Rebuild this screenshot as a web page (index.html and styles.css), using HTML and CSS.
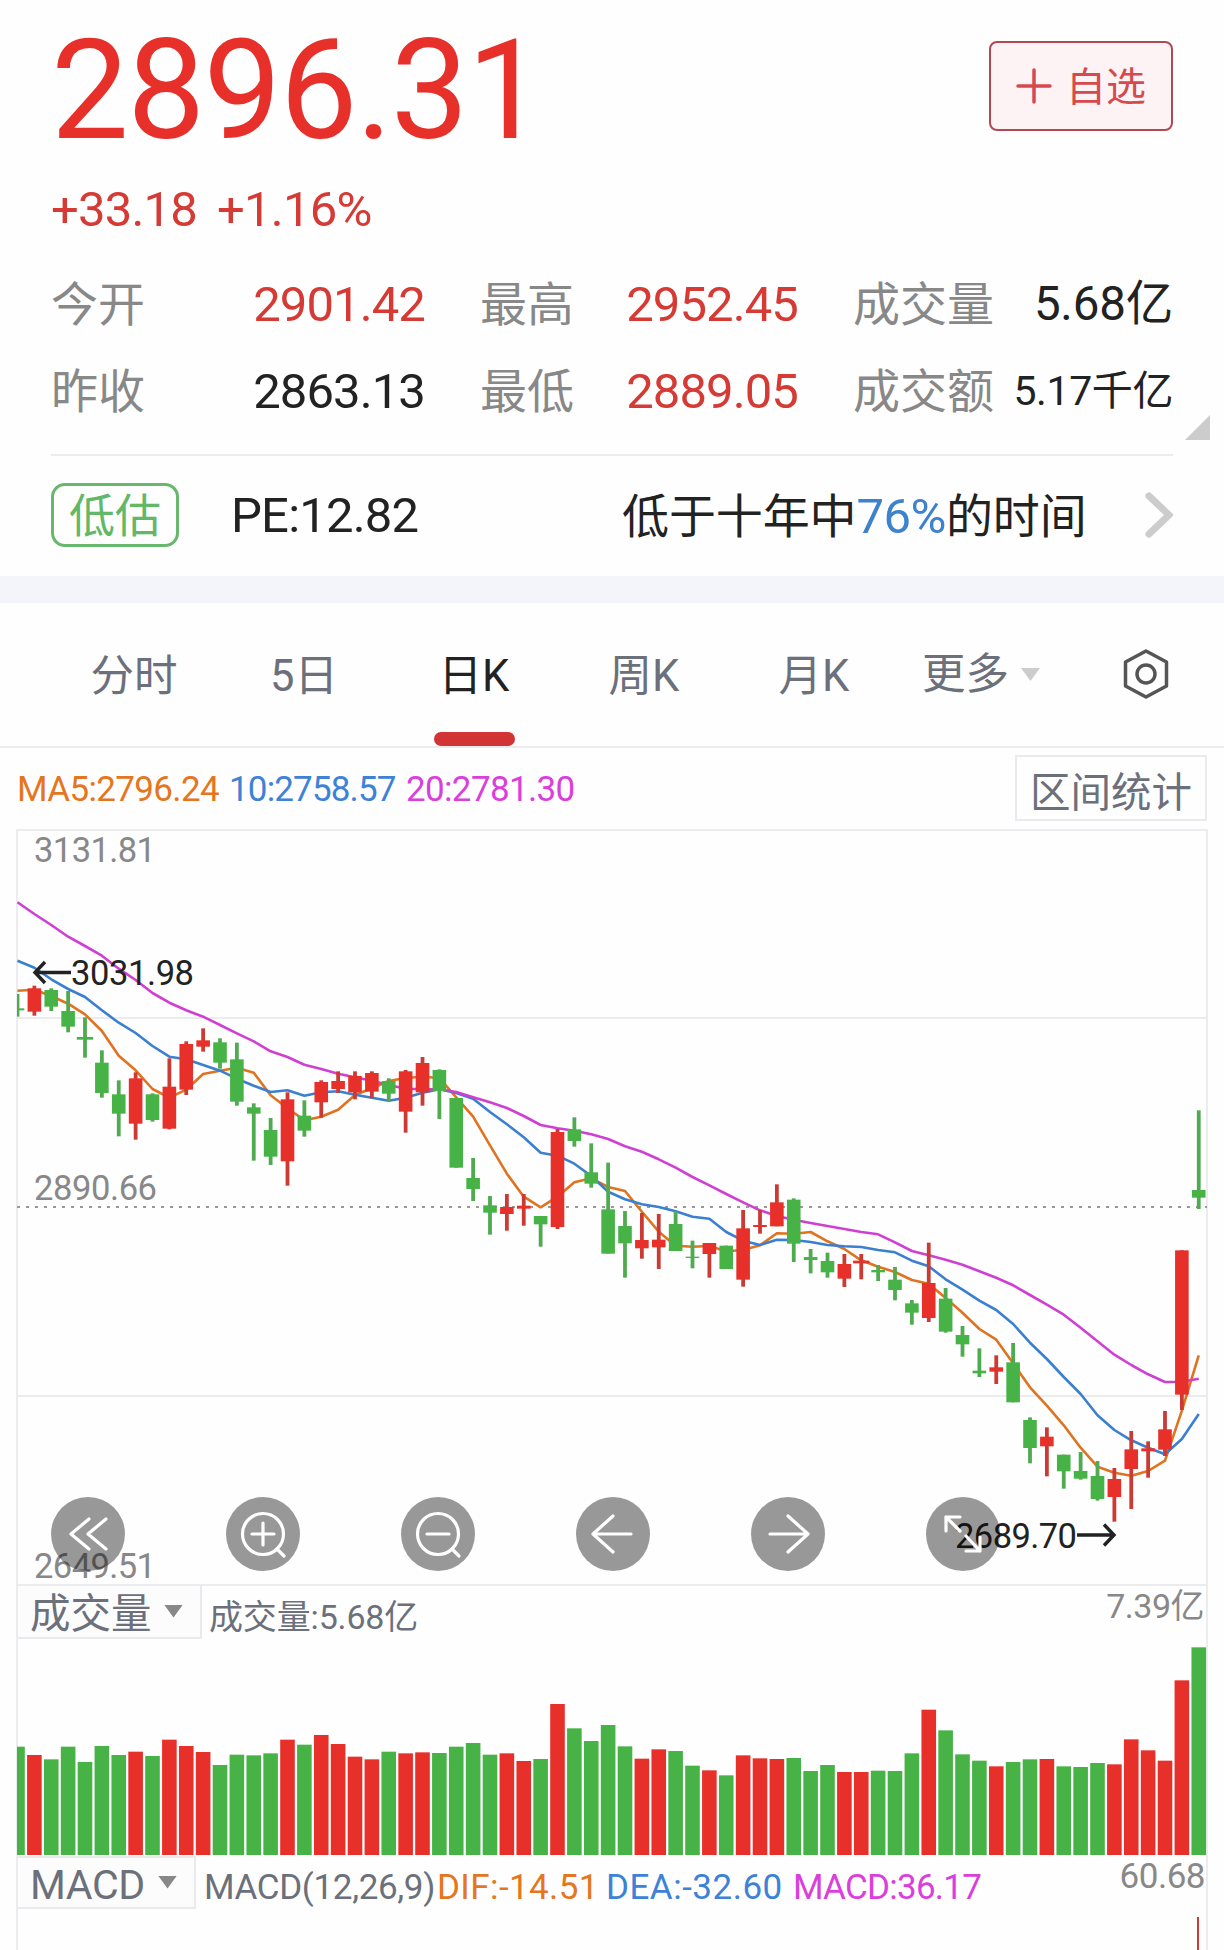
FILE: index.html
```html
<!DOCTYPE html>
<html lang="zh-CN">
<head>
<meta charset="utf-8">
<title>指数行情</title>
<link rel="stylesheet" href="styles.css">
</head>
<body>
<main class="page">
  <section class="quote">
    <div class="quote-top">
      <div class="price">2896.31</div>
      <button class="add-btn">
        <svg width="36" height="40" viewBox="0 0 36 40"><path d="M18 4V36M2 20H34"/></svg>
        <span>自选</span>
      </button>
    </div>
    <div class="change"><span>+33.18</span><span>+1.16%</span></div>
    <div class="metrics">
      <div class="metric"><span class="label">今开</span><span class="num up">2901.42</span></div>
      <div class="metric"><span class="label">最高</span><span class="num up">2952.45</span></div>
      <div class="metric"><span class="label">成交量</span><span class="num mixed">5.68亿</span></div>
      <div class="metric"><span class="label">昨收</span><span class="num">2863.13</span></div>
      <div class="metric"><span class="label">最低</span><span class="num up">2889.05</span></div>
      <div class="metric"><span class="label">成交额</span><span class="num small">5.17千亿</span></div>
    </div>
    <svg class="corner" width="26" height="26" viewBox="0 0 26 26"><path d="M26 0V25H1Z"/></svg>
    <div class="valuation">
      <span class="badge">低估</span>
      <span class="pe">PE:12.82</span>
      <span class="rank">低于十年中<b>76%</b>的时间</span>
      <svg class="chevron" width="30" height="48" viewBox="0 0 30 48"><path d="M6 5L26 24L6 43"/></svg>
    </div>
  </section>

  <nav class="tabs">
    <span class="tab">分时</span>
    <span class="tab">5日</span>
    <span class="tab active">日K</span>
    <span class="tab">周K</span>
    <span class="tab">月K</span>
    <span class="tab more">更多<i class="caret light"></i></span>
    <span class="gear">
      <svg width="48" height="52" viewBox="0 0 48 52"><path d="M24 3L44.500 14V38L24 49L3.500 38V14Z"/><circle cx="24" cy="26" r="9"/></svg>
    </span>
  </nav>

  <section class="chart">
    <div class="ma-row">
      <span class="ma5">MA5:2796.24</span>
      <span class="ma10">10:2758.57</span>
      <span class="ma20">20:2781.30</span>
      <button class="range-btn">区间统计</button>
    </div>

    <div class="kline">
      <svg id="kline" width="1224" height="757" viewBox="0 829 1224 757">
        <g class="grid">
          <path d="M17 830H1207M17 1018H1207M17 1396H1207M17 1585H1207"/>
          <path d="M17 829V1586M1207 829V1586"/>
          <path class="mid" d="M17 1207H1207"/>
        </g>
        <g id="averages"></g>
        <g id="candles"></g>
        <g class="axis">
          <text x="34" y="862" textLength="122">3131.81</text>
          <text x="34" y="1200" textLength="123">2890.66</text>
          <text x="34" y="1578" textLength="122">2649.51</text>
        </g>
        <g class="mark">
          <text x="71" y="985" textLength="123">3031.98</text>
          <path d="M71 972.500H35M45 962L35 972.500L45 983"/>
          <text x="955" y="1548" textLength="122">2689.70</text>
          <path d="M1077 1535H1114M1104 1524.500L1114 1535L1104 1545.500"/>
        </g>
      </svg>
      <div class="tools">
        <svg viewBox="-37 -37 74 74"><path d="M1 -15L-17 0L1 15M18 -15L0 0L18 15"/></svg>
        <svg viewBox="-37 -37 74 74"><circle r="20.500"/><path d="M-11 0H11M0 -11V11M14 15L21 22"/></svg>
        <svg viewBox="-37 -37 74 74"><circle r="20.500"/><path d="M-11 0H11M14 15L21 22"/></svg>
        <svg viewBox="-37 -37 74 74"><path d="M18 0H-20M0 -18L-20 0L0 18"/></svg>
        <svg viewBox="-37 -37 74 74"><path d="M-18 0H20M0 -18L20 0L0 18"/></svg>
        <svg viewBox="-37 -37 74 74"><path d="M-3 -3L-17 -17M-17 -3V-17H-3M3 2L17 17M17 3V17H3"/></svg>
      </div>
    </div>

    <div class="panel volume">
      <div class="panel-head">
        <span class="select"><span>成交量</span><i class="caret"></i></span>
        <span class="legend">成交量:5.68亿</span>
        <span class="max">7.39亿</span>
      </div>
      <svg id="volume" width="1190" height="216" viewBox="17 1640 1190 216"></svg>
    </div>

    <div class="panel macd">
      <div class="panel-head">
        <span class="select latin"><span>MACD</span><i class="caret"></i></span>
        <span class="legend m0">MACD(12,26,9)</span>
        <span class="legend m1">DIF:-14.51</span>
        <span class="legend m2">DEA:-32.60</span>
        <span class="legend m3">MACD:36.17</span>
        <span class="max">60.68</span>
      </div>
      <div class="macd-bar"></div>
    </div>
  </section>
</main>
<script src="chart.js"></script>
</body>
</html>
```
FILE: styles.css
```css
* { box-sizing: border-box; margin: 0; padding: 0; }
body {
  background: #fefefe;
  color: #222;
  font-family: Roboto, "Noto Sans CJK SC", sans-serif;
}
button { font: inherit; background: none; }
i, b { font-style: normal; font-weight: 400; }
.page { width: 1224px; height: 1950px; overflow: hidden; }
svg { display: block; }

.quote { position: relative; height: 576px; padding: 0 51px; }
.quote-top { display: flex; justify-content: space-between; height: 178px; }
.price { font-size: 138.5px; line-height: 183px; letter-spacing: -1.6px; color: #e8302a; }
.add-btn {
  display: flex; align-items: center; justify-content: center; gap: 14px;
  width: 184px; height: 90px; margin-top: 41px;
  border: 2px solid #b04a50; border-radius: 8px;
  background: #fdf3f4; color: #d64a4e; font-size: 40px; line-height: 60px;
}
.add-btn span { padding-top: 4px; }
.add-btn svg { fill: none; stroke: #d64a4e; stroke-width: 3.5; stroke-linecap: round; }
.change { display: flex; gap: 20px; height: 61px; line-height: 63px; font-size: 49px; letter-spacing: -.8px; color: #d53a35; }
.metrics {
  display: grid; grid-template-columns: 374px 318px 320px; column-gap: 55px;
  grid-auto-rows: 87px; margin-top: 22px; padding-bottom: 19px; height: 195px;
  border-bottom: 2px solid #ececec;
}
.metric { display: flex; justify-content: space-between; line-height: 87px; white-space: nowrap; }
.label { font-size: 47px; color: #888; }
.num { font-size: 49px; letter-spacing: -.9px; }
.num.up { color: #d53a35; }
.num.mixed { font-size: 47.5px; letter-spacing: -.2px; }
.num.small { font-size: 41px; letter-spacing: -.4px; }
.corner { position: absolute; left: 1184px; top: 415px; fill: #ccc; }
.valuation { display: flex; align-items: center; height: 117px; font-size: 49px; white-space: nowrap; }
.badge {
  width: 128px; height: 64px; border: 3px solid #68b76d; border-radius: 14px;
  color: #62b867; font-size: 46px; line-height: 61px; text-align: center;
}
.pe { margin-left: 52px; padding-top: 2px; width: 391px; letter-spacing: -.8px; }
.rank { margin-top: -4px; font-size: 47px; letter-spacing: -.1px; }
.rank b { color: #3d82cc; font-size: 49px; letter-spacing: -.5px; }
.chevron { margin-left: auto; fill: none; stroke: #ccc; stroke-width: 7; stroke-linecap: round; }

.tabs {
  display: grid; grid-template-columns: repeat(6, 170px) 1fr; align-items: center;
  height: 172px; padding-left: 49px; border-top: 27px solid #f4f5fa; border-bottom: 2px solid #ececec;
}
.tab {
  position: relative; height: 143px; line-height: 147px; text-align: center;
  font-size: 43.5px; color: #6b707b;
}
.tab.active { color: #222; }
.tab.active::after {
  content: ""; position: absolute; left: 45px; bottom: 0;
  width: 81px; height: 14px; border-radius: 7px; background: #d23436;
}
.tab.more { display: flex; justify-content: center; align-items: center; gap: 12px; padding-right: 6px; }
.caret { width: 19px; height: 13px; background: #888; clip-path: polygon(0 0, 100% 0, 50% 100%); }
.caret.light { background: #ccc; }
.gear { justify-self: center; padding: 0 2px 2px 0; }
.gear svg { fill: none; stroke: #555; stroke-width: 3.5; stroke-linejoin: round; }

.ma-row {
  display: flex; align-items: center; height: 81px; padding: 0 17px 0 17px;
  font-size: 35px; line-height: 50px; letter-spacing: -.65px;
}
.ma-row span { padding-top: 2px; }
.ma5 { color: #e5761e; width: 212px; }
.ma10 { color: #3d82d6; width: 177px; letter-spacing: -.85px; }
.ma20 { color: #da3fdc; }
.range-btn {
  margin-left: auto; width: 192px; height: 66px; margin-top: -1px;
  border: 2px solid #e9eaed; color: #6b707b;
  font-size: 40.5px; line-height: 60px; letter-spacing: 0; padding-top: 6px;
}
.kline { position: relative; height: 757px; }
.grid path { fill: none; stroke: #ececee; stroke-width: 2; }
.grid .mid { stroke: #999; stroke-dasharray: 3 6; }
.axis { font-size: 34.5px; fill: #888; }
.mark { font-size: 34.5px; fill: #222; }
.mark path { fill: none; stroke: #222; stroke-width: 3.4; }
#averages polyline { fill: none; stroke-width: 2.6; stroke-linejoin: round; }
.line5 { stroke: #df7320; }
.line10 { stroke: #3a7fd0; }
.line20 { stroke: #cf40d2; }
.rise { fill: #e8302a; }
.fall { fill: #47b347; }
#candles .rise.wick { fill: #ca3b34; }
#candles .fall.wick { fill: #4faa50; }
.tools { position: absolute; left: 51px; top: 668px; display: flex; gap: 101px; }
.tools svg {
  width: 74px; height: 74px; border-radius: 50%; background: rgba(0, 0, 0, .4);
  fill: none; stroke: #fff; stroke-width: 3.2; stroke-linecap: round; stroke-linejoin: round;
}

.panel { margin: 0 16px; border-left: 2px solid #ececee; border-right: 2px solid #ececee; }
.panel svg { margin-left: -1px; }
.panel-head { display: flex; height: 54px; font-size: 34px; color: #6b707b; white-space: nowrap; }
.select {
  display: flex; align-items: center; justify-content: space-between; width: 184px; height: 53px;
  padding: 0 17px 0 12px; border: 2px solid #e9eaed; border-left: 0; border-top: 0;
  background: #fcfcfd; font-size: 40.500px; line-height: 50px;
}
.select span { padding-top: 4px; }
.select .caret { margin-top: -1px; }
.volume .legend { margin-left: 7px; line-height: 62px; letter-spacing: -.15px; }
.max { margin-left: auto; margin-right: 2px; color: #888; line-height: 40px; letter-spacing: -.5px; }
.macd { height: 94px; }
.select.latin { width: 178px; border-top: 2px solid #e9eaed; font-size: 41px; letter-spacing: -.4px; }
.macd .legend { font-size: 35px; line-height: 63px; }
.macd .max { font-size: 35px; line-height: 42px; margin-right: 1px; }
.m0 { width: 233px; margin-left: 8px; letter-spacing: -.35px; }
.m1 { width: 169px; color: #e5761e; letter-spacing: .4px; }
.m2 { width: 187px; color: #3d82d6; letter-spacing: .5px; }
.m3 { color: #da3fdc; letter-spacing: -.75px; }
.macd-bar { width: 2px; height: 33px; margin: 7px 7px 0 auto; background: #ca3b34; }
```
FILE: chart.js
```js
// Candles: colour, body top, body bottom, high, low, in thirds of a pixel below the block's base.
const blocks = [
  { base: 830, rows: `G 535 541 492 560|R 475 545 467 557|G 480 530 475 543|G 543 590 483 607|G 621 629 562 683 w
|G 698 789 661 803|G 793 851 751 919|R 745 881 727 929|G 793 870 790 875|R 770 896 685 898|R 642 779 634 795
|R 631 650 595 665|G 637 698 625 716|G 688 815 638 827|G 832 851 820 992|G 900 980 864 1005|R 808 994 787 1067
|G 857 902 811 920|R 756 817 751 863|R 753 777 724 789|R 738 787 724 808|R 729 785 724 805|G 753 791 745 814` },
  { base: 1020, rows: `R 154 275 150 338|R 129 217 111 257|G 150 213 148 297|G 234 443 234 443|G 474 507 414 543
|G 556 578 528 644|R 561 582 522 632|R 557 566 522 617|G 588 613 588 680|R 336 621 327 627|G 328 363 292 380
|G 457 491 370 503|G 568 701 428 701|G 618 670 573 773|R 660 685 579 716|R 659 682 582 747|G 612 693 573 693
|G 710 714 662 745|R 669 702 669 773|G 677 747 677 747|R 625 779 570 800|R 615 621 570 641|R 547 619 493 619
|G 539 671 535 726` },
  { base: 1080, rows: `G 531 540 507 580|G 543 577 518 593|R 552 596 522 621|R 542 550 522 598 w|G 570 577 555 603
|G 599 630 561 661|G 670 698 660 734|R 609 714 488 726|G 656 755 624 758|G 765 793 738 830|G 872 880 805 891
|R 862 875 826 912|G 847 967 789 967|G 1020 1104 1012 1150|R 1070 1099 1042 1189|G 1124 1174 1124 1226
|G 1173 1196 1116 1199|G 1188 1257 1143 1262|R 1197 1251 1164 1325|R 1108 1167 1053 1287|R 1105 1114 1084 1193
|R 1048 1109 993 1128|R 511 944 511 990|G 330 353 91 387` }
];

// Moving averages, one list for each block above.
const averages = {
  line5: [
    [482,479,498,521,553,603,677,721,777,803,779,732,722,713,728,796,835,871,860,839,795,775,753],
    [174,170,174,232,290,376,461,530,562,530,487,475,501,513,575,635,677,680,678,694,690,676,640,641],
    [456,484,507,541,560,576,600,611,654,698,747,779,850,922,977,1036,1103,1160,1178,1187,1173,1142,992,826]],
  line10: [
    [392,413,448,477,501,541,578,609,648,680,688,705,722,746,767,786,781,797,787,784,794,803,812],
    [233,218,208,219,236,276,313,352,398,407,431,468,515,538,553,561,574,590,596,636,662,675,659,660],
    [486,495,499,501,510,517,542,559,598,629,662,690,732,788,837,891,942,1006,1050,1081,1103,1123,1077,1002]],
  line20: [
    [217,252,285,320,348,377,416,450,489,518,541,560,585,610,634,664,681,704,717,731,742,752,765],
    [206,208,208,216,232,247,264,288,315,325,332,343,357,379,395,418,443,471,496,522,547,571,588,599],
    [429,438,447,456,463,487,513,526,539,554,574,593,616,645,674,704,743,784,824,855,883,906,905,896]]
};

// Tops of the volume bars, in thirds of a pixel below y = 1640.
const volumes = [320,345,358,320,366,318,345,335,348,299,318,336,375,344,346,340,299,314,285,312,350,358,335,340,337,
  339,320,309,344,340,363,357,192,265,303,255,319,356,328,333,377,391,406,346,355,357,354,393,375,396,396,392,393,
  340,209,271,343,362,379,366,358,357,379,381,369,373,298,331,362,121,22];

const NS = 'http://www.w3.org/2000/svg';
const xOf = i => 17.5 + 16.875 * i;

function add(parent, tag, attrs) {
  const el = document.createElementNS(NS, tag);
  for (const k in attrs) el.setAttribute(k, attrs[k]);
  parent.appendChild(el);
}

function rect(parent, cls, centre, width, top, bottom) {
  const left = Math.max(17, centre - width / 2);
  add(parent, 'rect', { class: cls, x: left, y: top, width: centre + width / 2 - left, height: bottom - top });
}

for (const name of ['line5', 'line10', 'line20']) {
  let i = 0;
  const points = [];
  averages[name].forEach((list, b) => {
    for (const v of list) points.push(xOf(i++) + ',' + (blocks[b].base + v / 3).toFixed(1));
  });
  add(document.getElementById('averages'), 'polyline', { class: name, points: points.join(' ') });
}

const candles = document.getElementById('candles');
const volume = document.getElementById('volume');
let i = 0;
for (const block of blocks) {
  for (const row of block.rows.split('|')) {
    const [colour, ...rest] = row.trim().split(' ');
    const [top, bottom, high, low] = rest.slice(0, 4).map(v => block.base + v / 3);
    const cls = colour === 'R' ? 'rise' : 'fall';
    rect(candles, cls + ' wick', xOf(i), 3.8, high, low);
    rect(candles, cls, xOf(i), rest[4] ? 16.4 : 13.6, top, bottom);
    rect(volume, cls, xOf(i), 14.6, 1640 + volumes[i] / 3, 1855);
    i++;
  }
}
```
